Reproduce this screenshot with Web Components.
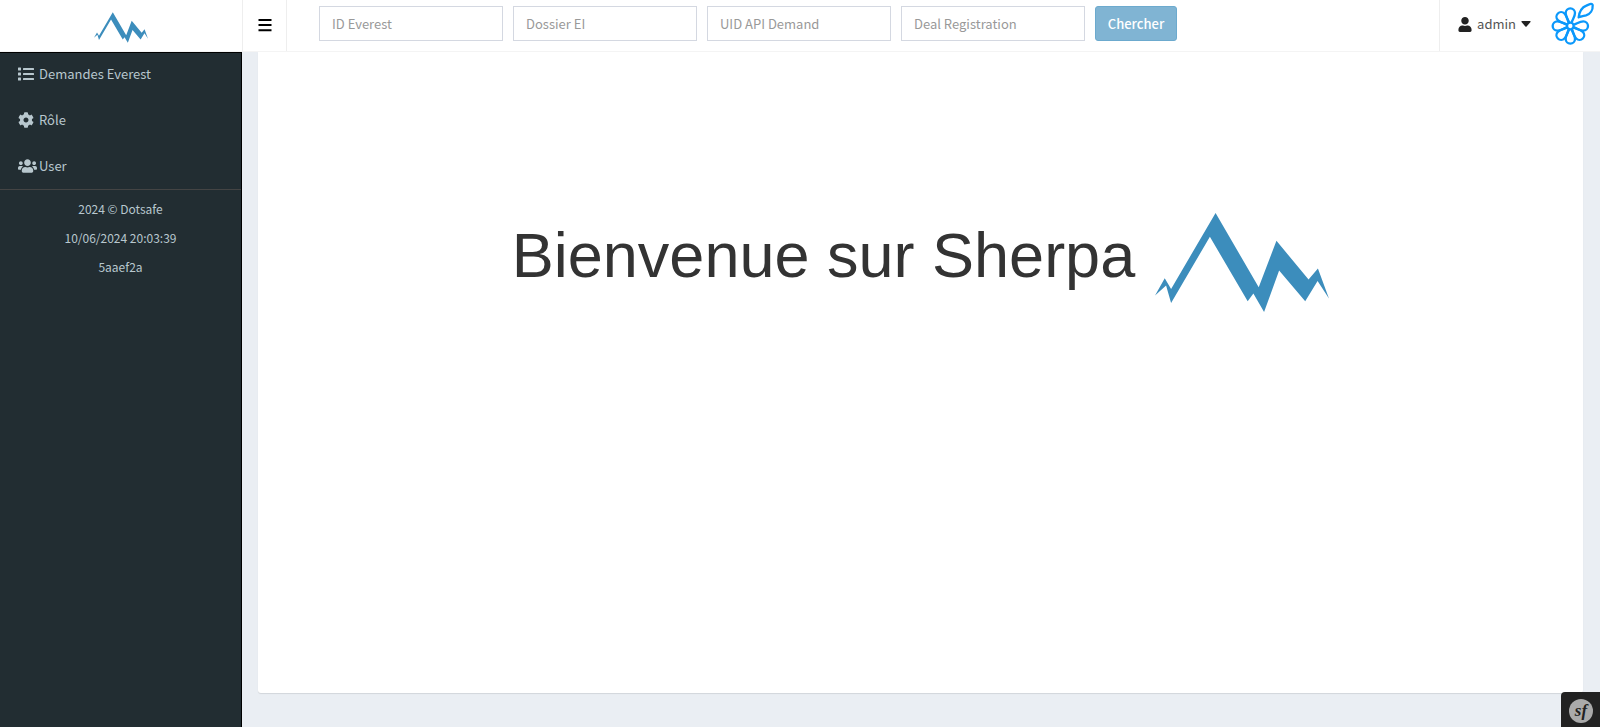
<!DOCTYPE html>
<html lang="fr">
<head>
<meta charset="utf-8">
<title>Sherpa</title>
<style>
  body { margin: 0; font: 13px/20px "Noto Sans CJK SC", "Noto Sans", sans-serif; color: #333; }
</style>
</head>
<body>
<sherpa-app>
  <sherpa-header slot="header"></sherpa-header>
  <sherpa-sidebar slot="sidebar">
    <nav-item icon="list">Demandes Everest</nav-item>
    <nav-item icon="cog">Rôle</nav-item>
    <nav-item icon="users">User</nav-item>
    <span slot="info">2024 © Dotsafe</span>
    <span slot="info">10/06/2024 20:03:39</span>
    <span slot="info">5aaef2a</span>
  </sherpa-sidebar>
  <welcome-panel>Bienvenue sur Sherpa</welcome-panel>
</sherpa-app>
<debug-badge></debug-badge>

<script>
const ICONS = {
  bars: ['0 0 448 512', '<path d="M16 60h416v64H16zM16 224h416v64H16zM16 388h416v64H16z"/>'],
  list: ['0 0 512 512', '<rect y="48" width="96" height="96" rx="16"/><rect y="208" width="96" height="96" rx="16"/><rect y="368" width="96" height="96" rx="16"/><rect x="160" y="64" width="352" height="64" rx="16"/><rect x="160" y="224" width="352" height="64" rx="16"/><rect x="160" y="384" width="352" height="64" rx="16"/>'],
  user: ['0 0 448 512', '<path d="M224 256c70.7 0 128-57.3 128-128S294.7 0 224 0 96 57.3 96 128s57.3 128 128 128zm89.6 32h-16.7c-22.2 10.2-46.9 16-72.9 16s-50.6-5.8-72.9-16h-16.7C60.2 288 0 348.2 0 422.4V464c0 26.5 21.5 48 48 48h352c26.5 0 48-21.5 48-48v-41.6c0-74.2-60.2-134.4-134.4-134.4z"/>'],
  cog: ['0 0 512 512', '<path d="M487.4 315.7l-42.6-24.6c4.3-23.2 4.3-47 0-70.2l42.6-24.6c4.9-2.8 7.1-8.6 5.5-14-11.1-35.6-30-67.8-54.7-94.6-3.8-4.1-10-5.1-14.8-2.3L380.8 110c-17.9-15.4-38.5-27.3-60.8-35.1V25.8c0-5.6-3.9-10.5-9.4-11.7-36.7-8.2-74.3-7.8-109.2 0-5.5 1.2-9.4 6.1-9.4 11.7V75c-22.2 7.9-42.8 19.8-60.8 35.1L88.7 85.5c-4.9-2.8-11-1.9-14.8 2.3-24.7 26.7-43.6 58.9-54.7 94.6-1.7 5.4.6 11.2 5.5 14L67.3 221c-4.3 23.2-4.3 47 0 70.2l-42.6 24.6c-4.9 2.8-7.1 8.6-5.5 14 11.1 35.6 30 67.8 54.7 94.6 3.8 4.1 10 5.1 14.8 2.3l42.6-24.6c17.9 15.4 38.5 27.3 60.8 35.1v49.2c0 5.6 3.9 10.5 9.4 11.7 36.7 8.2 74.3 7.8 109.2 0 5.5-1.2 9.4-6.1 9.4-11.7v-49.2c22.2-7.9 42.8-19.8 60.8-35.1l42.6 24.6c4.9 2.8 11 1.9 14.8-2.3 24.7-26.7 43.6-58.9 54.7-94.6 1.5-5.5-.7-11.3-5.6-14.1zM256 336c-44.1 0-80-35.9-80-80s35.9-80 80-80 80 35.9 80 80-35.9 80-80 80z"/>'],
  users: ['0 0 640 512', '<path d="M96 224c35.3 0 64-28.7 64-64s-28.7-64-64-64-64 28.7-64 64 28.7 64 64 64zm448 0c35.3 0 64-28.7 64-64s-28.7-64-64-64-64 28.7-64 64 28.7 64 64 64zm32 32h-64c-17.6 0-33.5 7.1-45.1 18.6 40.3 22.1 68.9 62 75.1 109.4h66c17.7 0 32-14.3 32-32v-32c0-35.3-28.7-64-64-64zm-256 0c61.9 0 112-50.1 112-112S381.9 32 320 32 208 82.1 208 144s50.1 112 112 112zm76.8 32h-8.3c-20.8 10-43.9 16-68.5 16s-47.6-6-68.5-16h-8.3C179.6 288 128 339.6 128 403.2V432c0 26.5 21.5 48 48 48h288c26.5 0 48-21.5 48-48v-28.8c0-63.6-51.6-115.2-115.2-115.2zm-223.7-13.4C161.5 263.1 145.6 256 128 256H64c-35.3 0-64 28.7-64 64v32c0 17.7 14.3 32 32 32h65.9c6.3-47.4 34.9-87.3 75.2-109.4z"/>'],
  caret: ['0 0 10 6', '<path d="M1 0h8q1 0 .5 1L5.600 5.500q-.6.500-1.200 0L.5 1Q0 0 1 0z"/>'],
  mountain: ['76 70 520 296', '<path d="M76 317 105 265 124 297 257 70 386 292 439 153 535 269 563 236 596 326 562 273 525 334 447 242 402 366 370 311 353 334 240 141 124 339 109 287z"/>']
};
const svg = (name) => `<svg viewBox="${ICONS[name][0]}" fill="currentColor" aria-hidden="true">${ICONS[name][1]}</svg>`;

class BaseElement extends HTMLElement {
  connectedCallback() {
    if (!this.shadowRoot) this.attachShadow({ mode: 'open' }).innerHTML = this.render();
  }
}

customElements.define('ui-icon', class extends BaseElement {
  render() {
    return `<style>:host{display:inline-flex;width:16px;height:16px;flex:none}svg{width:100%;height:100%;display:block}</style>${svg(this.getAttribute('name'))}`;
  }
});

customElements.define('sherpa-app', class extends BaseElement {
  render() {
    return `<style>
      :host{display:grid;grid-template:auto 1fr / 242px 1fr;min-height:100vh;background:#eaeef3}
      slot[name=header]::slotted(*){grid-column:1 / -1}
      main{display:flex;padding:0 17px 34px 16px}
      main ::slotted(*){flex:1}
    </style>
    <slot name="header"></slot><slot name="sidebar"></slot><main><slot></slot></main>`;
  }
});

customElements.define('search-field', class extends BaseElement {
  render() {
    const label = this.getAttribute('label');
    return `<style>
      :host{display:block;width:184px}
      input{box-sizing:border-box;width:100%;height:35px;padding:0 12px;border:1px solid #d4d8e1;border-radius:0;background:#fff;font:inherit;color:#555;display:block}
      input::placeholder{color:#999;opacity:1}
    </style><input type="text" aria-label="${label}" placeholder="${label}">`;
  }
});

customElements.define('sherpa-header', class extends BaseElement {
  render() {
    const petal = 'M-4-11C-7-20-14-28-14-39a14 14 0 0 1 28 0C14-28 7-20 4-11';
    const petals = [0, 90, 135, 180, 225, 270, 315].map(a => `<path d="${petal}" transform="rotate(${a})"/>`).join('');
    return `<style>
      :host{display:grid;grid-template-columns:242px 45px 1fr auto;background:#fff;border-bottom:1px solid #f4f4f4;height:51px}
      .brand{display:flex;align-items:center;justify-content:center;color:#3c8dbc;padding-top:3px}
      .brand ui-icon{width:54px;height:31px}
      button{font:inherit;border:0;background:none;padding:0;cursor:pointer}
      .toggle{border:solid #eee;border-width:0 1px;display:flex;align-items:center;justify-content:center;color:#000;padding-bottom:2px}
      .toggle ui-icon{width:14px}
      form{display:flex;gap:10px;padding:6px 32px}
      .search{height:35px;width:82px;border-radius:3px;border:1px solid #6caace;background:#80b4d3;color:#fff;font-weight:500}
      .right{display:flex;border-left:1px solid #eee;align-items:center;padding:0 5px 3px 18px}
      .account{display:flex;align-items:center;color:#555;gap:5px}
      .account ui-icon{color:#222}
      .account .person{width:14px;height:15px}
      .account .caret{width:10px;height:6px}
      .flower{display:block;margin-left:20px}
      .flower svg{display:block;width:44px;height:44px}
    </style>
    <a class="brand" href="#" aria-label="Sherpa"><ui-icon name="mountain"></ui-icon></a>
    <button class="toggle" aria-label="Menu"><ui-icon name="bars"></ui-icon></button>
    <form>
      <search-field label="ID Everest"></search-field>
      <search-field label="Dossier EI"></search-field>
      <search-field label="UID API Demand"></search-field>
      <search-field label="Deal Registration"></search-field>
      <button class="search" type="button">Chercher</button>
    </form>
    <div class="right">
      <button class="account"><ui-icon class="person" name="user"></ui-icon><span>admin</span><ui-icon class="caret" name="caret"></ui-icon></button>
      <a class="flower" href="#" aria-label="Dotsafe"><svg viewBox="-58 -72 132 132" fill="none" stroke="#0b98fb" stroke-width="7" stroke-linejoin="round"><circle r="10"/>${petals}<path d="M25-26C27-42 33-55 48-61 57-65 67-70 67-62 68-48 60-36 47-32 38-30 32-30 25-26z"/></svg></a>
    </div>`;
  }
});

customElements.define('nav-item', class extends BaseElement {
  render() {
    return `<style>
      :host{display:block}
      a{display:flex;align-items:center;height:46px;padding:0 18px;color:#b8c7ce;text-decoration:none}
      .icon{width:21px;display:flex;flex:none}
      .users{width:19px}
    </style><a href="#"><span class="icon"><ui-icon class="${this.getAttribute('icon')}" name="${this.getAttribute('icon')}"></ui-icon></span><span><slot></slot></span></a>`;
  }
});

customElements.define('sherpa-sidebar', class extends BaseElement {
  render() {
    return `<style>
      :host{display:block;background:#222d32;color:#b8c7ce;border:solid #000;border-width:1px 1px 0 0}
      nav{border-bottom:1px solid #444}
      nav ::slotted(:first-child){margin-top:-2px}
      footer{display:flex;flex-direction:column;align-items:center;gap:9px;padding-top:9px;font-size:12px;line-height:20px}
    </style><nav><slot></slot></nav><footer><slot name="info"></slot></footer>`;
  }
});

customElements.define('welcome-panel', class extends BaseElement {
  render() {
    return `<style>
      :host{display:block;background:#fff;border-radius:0 0 3px 3px;box-shadow:0 1px 1px rgba(0,0,0,.1)}
      h1{margin:0;padding-top:161px;display:flex;justify-content:center;gap:20px;font:400 63px/84px "Liberation Sans",Arial,sans-serif;color:#333}
      ui-icon{width:174px;height:99px;color:#3c8dbc}
    </style><h1><slot></slot><ui-icon name="mountain"></ui-icon></h1>`;
  }
});

customElements.define('debug-badge', class extends BaseElement {
  render() {
    return `<style>
      :host{position:fixed;right:0;bottom:0}
      button{display:flex;align-items:center;justify-content:center;width:39px;height:35px;padding:2px 0 0;border:0;border-radius:4px 0 0 0;background:#222}
      svg{width:24px;height:24px}
      text{font:italic bold 17px "Liberation Serif",serif}
    </style><button aria-label="Symfony"><svg viewBox="0 0 24 24"><circle cx="12" cy="12" r="12" fill="#aaa"/><text x="12" y="17" text-anchor="middle" fill="#222">sf</text></svg></button>`;
  }
});
</script>
</body>
</html>
